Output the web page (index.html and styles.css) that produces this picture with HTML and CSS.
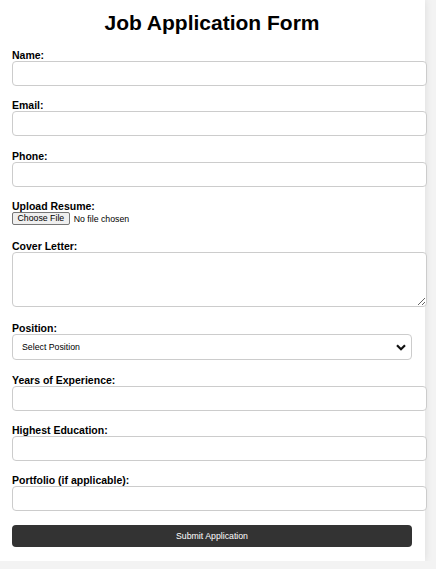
FILE: index.html
```html
<!DOCTYPE html>
<html lang="en">
<head>
<meta charset="utf-8">
<title>Job Application Form</title>
<link rel="stylesheet" href="styles.css">
</head>
<body>
<div class="container">
  <h1 class="title">Job Application Form</h1>
  <form class="form">
    <label class="label" for="name">Name:</label>
    <input class="field" type="text" id="name">

    <label class="label" for="email">Email:</label>
    <input class="field" type="email" id="email">

    <label class="label" for="phone">Phone:</label>
    <input class="field" type="tel" id="phone">

    <label class="label" for="resume">Upload Resume:</label>
    <input class="file" type="file" id="resume">

    <label class="label" for="cover">Cover Letter:</label>
    <textarea class="field area" id="cover"></textarea>

    <label class="label" for="position">Position:</label>
    <div class="select-wrap">
      <select class="select" id="position">
        <option>Select Position</option>
      </select>
      <svg class="chevron" width="10" height="7" viewBox="0 0 10 7"><path d="M1 1.2 L5 5.2 L9 1.2" fill="none" stroke="#111" stroke-width="2.2"/></svg>
    </div>

    <label class="label" for="years">Years of Experience:</label>
    <input class="field" type="text" id="years">

    <label class="label" for="edu">Highest Education:</label>
    <input class="field" type="text" id="edu">

    <label class="label" for="portfolio">Portfolio (if applicable):</label>
    <input class="field" type="text" id="portfolio">

    <button class="submit" type="button">Submit Application</button>
  </form>
</div>
</body>
</html>
```

FILE: styles.css
```css
html, body {
  margin: 0;
  padding: 0;
}
body {
  background: #f3f3f3;
  font-family: "Liberation Sans", Arial, sans-serif;
  color: #000;
}
.container {
  width: 400px;
  padding: 11px 13px 14px 12px;
  background: #fff;
  box-shadow: 0 0 8px rgba(0, 0, 0, 0.1);
}
.title {
  margin: 0 0 14px;
  font-size: 21px;
  line-height: 24px;
  font-weight: bold;
  text-align: center;
  color: #000;
}
.form {
  display: flex;
  flex-direction: column;
  align-items: flex-start;
}
.label {
  display: block;
  font-size: 10.5px;
  line-height: 12px;
  font-weight: bold;
}
.field {
  box-sizing: border-box;
  width: 415px;
  height: 25px;
  margin: 0 0 13.25px;
  padding: 4px 7px;
  border: 1px solid #ccc;
  border-radius: 4px;
  font-family: "Liberation Sans", Arial, sans-serif;
  font-size: 8.75px;
  background: #fff;
}
.area {
  height: 55px;
  margin-bottom: 15px;
}
.file {
  height: 13px;
  margin: 0 0 15.5px;
  font-family: "Liberation Sans", Arial, sans-serif;
  font-size: 8.75px;
}
.file::file-selector-button {
  font-family: "Liberation Sans", Arial, sans-serif;
  font-size: 8.75px;
  padding: 0 4.5px;
  height: 13px;
  margin-right: 4px;
  border: 1px solid #767676;
  border-radius: 2px;
  background: #efefef;
}
.select-wrap {
  position: relative;
  width: 400px;
  margin: 0 0 13.25px;
}
.select {
  box-sizing: border-box;
  appearance: none;
  -webkit-appearance: none;
  display: block;
  width: 400px;
  height: 26px;
  padding: 0 9px;
  border: 1px solid #ccc;
  border-radius: 4px;
  background: #fff;
  color: #000;
  font-family: "Liberation Sans", Arial, sans-serif;
  font-size: 8.75px;
}
.chevron {
  position: absolute;
  right: 6px;
  top: 10px;
  pointer-events: none;
}
.submit {
  width: 400px;
  height: 22px;
  margin-top: 0.5px;
  border: none;
  border-radius: 4px;
  background: #333;
  color: #fff;
  font-family: "Liberation Sans", Arial, sans-serif;
  font-size: 8.75px;
  cursor: pointer;
}
```
